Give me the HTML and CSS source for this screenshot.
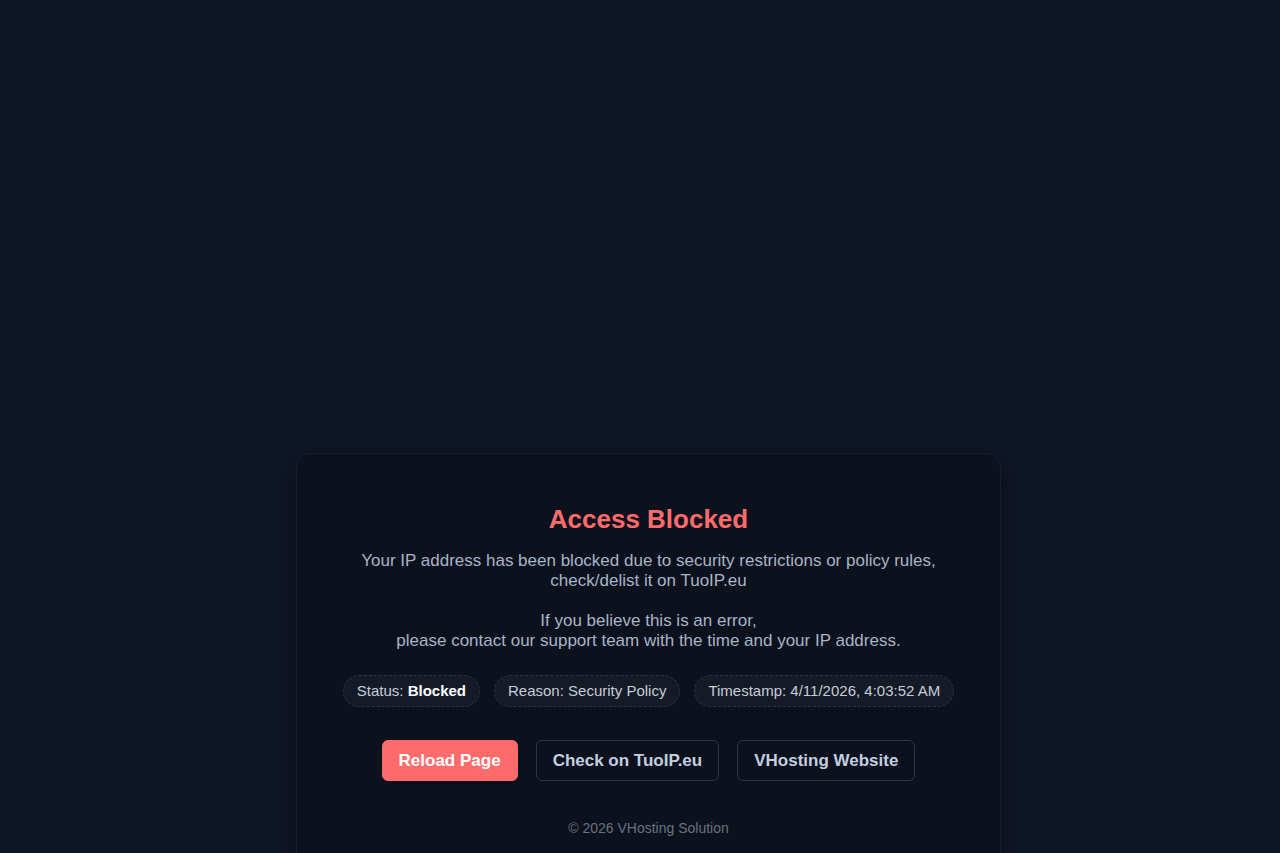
FILE: index.html
```html
<!DOCTYPE html>
<html lang="en">
<head>
    <meta charset="UTF-8">
    <meta name="viewport" content="width=device-width, initial-scale=1.0">
    <title>Access Blocked</title>
    <link rel="stylesheet" href="styles.css">
</head>
<body>

    <div class="card">
        <h1>Access Blocked</h1>

        <p class="message">
            Your IP address has been blocked due to security restrictions or policy rules,<br>
            check/delist it on TuoIP.eu<br><br>
            If you believe this is an error,<br>
            please contact our support team with the time and your IP address.
        </p>

        <div class="pills">
            <span class="pill">Status: <b>Blocked</b></span>
            <span class="pill">Reason: Security Policy</span>
            <span class="pill">Timestamp: 4/11/2026, 4:03:52 AM</span>
        </div>

        <div class="actions">
            <a href="#" class="btn primary">Reload Page</a>
            <a href="#" class="btn">Check on TuoIP.eu</a>
            <a href="#" class="btn">VHosting Website</a>
        </div>

        <p class="footer">&copy; 2026 VHosting Solution</p>
    </div>

</body>
</html>
```

FILE: styles.css
```css
* {
    margin: 0;
    padding: 0;
    box-sizing: border-box;
    font-family: "Liberation Sans", Arial, sans-serif;
}
body {
    background: #0f1626;
    color: #a9b4c6;
    text-align: center;
    padding: 453px 0 0 17px;
}
.card {
    width: 705px;
    margin: 0 auto;
    background: #0b111d;
    border: 1px solid #161e2c;
    border-radius: 14px;
    box-shadow: 0 10px 30px rgba(0, 0, 0, 0.35);
    padding: 50px 40px 40px;
}
h1 {
    color: #ff6b6b;
    font-size: 26px;
    font-weight: bold;
    line-height: 30px;
}
.message {
    margin-top: 17px;
    font-size: 17px;
    line-height: 20px;
    color: #a9b4c6;
}
.pills {
    display: flex;
    justify-content: center;
    gap: 14px;
    margin-top: 24px;
}
.pill {
    font-size: 15px;
    color: #c6cdd8;
    background: #141b27;
    border: 1px dashed #2a3343;
    border-radius: 999px;
    padding: 7px 13px;
    line-height: 16px;
}
.pill b {
    color: #ffffff;
}
.actions {
    display: flex;
    justify-content: center;
    gap: 18px;
    margin-top: 33px;
}
.btn {
    display: inline-block;
    font-size: 17px;
    font-weight: bold;
    line-height: 19px;
    padding: 10px 16px;
    border: 1px solid #2c3646;
    border-radius: 6px;
    color: #c3cfe0;
    text-decoration: none;
}
.btn.primary {
    background: #ff6b6b;
    border-color: #ff6b6b;
    color: #ffffff;
}
.footer {
    margin-top: 39px;
    font-size: 14px;
    color: #6b7280;
}
```
